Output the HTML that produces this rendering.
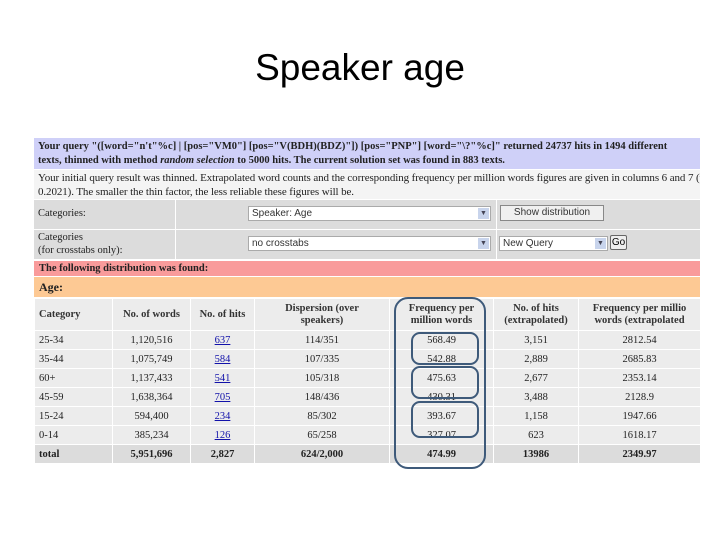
<!DOCTYPE html>
<html><head><meta charset="utf-8"><style>
body{margin:0;width:720px;height:540px;background:#fff;position:relative;overflow:hidden;font-family:"Liberation Serif",serif;}
.a{position:absolute;box-sizing:border-box;}
h1{position:absolute;left:0;width:720px;top:47px;margin:0;text-align:center;font:400 37px "Liberation Sans",sans-serif;color:#000;}
.t{font-size:10.5px;color:#222;line-height:14px;}
.sel{position:absolute;background:#fff;border:1px solid #aaa;font:10px "Liberation Sans",sans-serif;color:#333;padding-left:3px;line-height:13px;height:15px;box-sizing:border-box;}
.sel i{position:absolute;right:1px;top:1px;width:11px;height:11px;background:#c8d4ec;font-style:normal;font-size:7px;text-align:center;line-height:11px;color:#445;}
table{position:absolute;left:34px;top:298px;border-collapse:separate;border-spacing:1px;font-size:10.5px;color:#222;}
td{background:#ececec;text-align:center;padding:0;height:18px;}
tr.h td{font-weight:bold;height:31px;line-height:12px;color:#333;}
tr.tot td{background:#dcdcdc;font-weight:bold;}
td:first-child{text-align:left;padding-left:4px;}
a{color:#11a;text-decoration:underline;}
.r{border:2px solid #3e5a7a;border-radius:9px;}
</style></head><body>
<h1>Speaker age</h1>
<div class="a t" style="left:34px;top:138px;width:666px;height:31px;background:#cfd0f8;padding:2px 4px;font-weight:bold;white-space:nowrap;overflow:hidden;">Your query "([word="n't"%c] | [pos="VM0"] [pos="V(BDH)(BDZ)"]) [pos="PNP"] [word="\?"%c]" returned 24737 hits in 1494 different<br>texts, thinned with method <i>random selection</i> to 5000 hits. The current solution set was found in 883 texts.</div>
<div class="a t" style="left:34px;top:170px;width:666px;height:29px;background:#f4f4f4;padding:1px 4px;white-space:nowrap;overflow:hidden;font-size:11px;letter-spacing:-0.1px;">Your initial query result was thinned. Extrapolated word counts and the corresponding frequency per million words figures are given in columns 6 and 7 (thin-fa<br>0.2021). The smaller the thin factor, the less reliable these figures will be.</div>
<div class="a" style="left:34px;top:200px;width:141px;height:29px;background:#dcdcdc;"></div>
<div class="a" style="left:176px;top:200px;width:320px;height:29px;background:#dcdcdc;"></div>
<div class="a" style="left:497px;top:200px;width:203px;height:29px;background:#dcdcdc;"></div>
<div class="a" style="left:34px;top:230px;width:141px;height:29px;background:#dcdcdc;"></div>
<div class="a" style="left:176px;top:230px;width:320px;height:29px;background:#dcdcdc;"></div>
<div class="a" style="left:497px;top:230px;width:203px;height:29px;background:#dcdcdc;"></div>
<div class="a t" style="left:38px;top:207px;font-size:10.5px;">Categories:</div>
<div class="a t" style="left:38px;top:231px;font-size:10.5px;line-height:13px;">Categories<br>(for crosstabs only):</div>
<div class="sel" style="left:248px;top:206px;width:243px;">Speaker: Age<i>▼</i></div>
<div class="sel" style="left:248px;top:236px;width:243px;">no crosstabs<i>▼</i></div>
<div class="sel" style="left:499px;top:236px;width:109px;">New Query<i>▼</i></div>
<div class="a" style="left:610px;top:235px;width:17px;height:15px;background:#eee;border:1px solid #666;border-radius:2px;font:10px 'Liberation Sans',sans-serif;text-align:center;line-height:13px;">Go</div>
<div class="a" style="left:500px;top:205px;width:104px;height:16px;background:#f0f0f0;border:1px solid #888;font:10px 'Liberation Sans',sans-serif;text-align:center;line-height:14px;color:#333;">Show distribution</div>
<div class="a t" style="left:34px;top:261px;width:666px;height:15px;background:#f99b9b;padding:1px 5px;font-weight:bold;">The following distribution was found:</div>
<div class="a t" style="left:34px;top:277px;width:666px;height:20px;background:#fdc994;padding:3px 5px;font-weight:bold;font-size:12px;">Age:</div>
<table>
<tr class="h"><td style="width:73px">Category</td><td style="width:77px">No. of words</td><td style="width:63px">No. of hits</td><td style="width:134px">Dispersion (over<br>speakers)</td><td style="width:103px">Frequency per<br>million words</td><td style="width:84px">No. of hits<br>(extrapolated)</td><td style="width:121px;white-space:nowrap">Frequency per millio<br>words (extrapolated</td></tr>
<tr><td>25-34</td><td>1,120,516</td><td><a>637</a></td><td>114/351</td><td>568.49</td><td>3,151</td><td>2812.54</td></tr>
<tr><td>35-44</td><td>1,075,749</td><td><a>584</a></td><td>107/335</td><td>542.88</td><td>2,889</td><td>2685.83</td></tr>
<tr><td>60+</td><td>1,137,433</td><td><a>541</a></td><td>105/318</td><td>475.63</td><td>2,677</td><td>2353.14</td></tr>
<tr><td>45-59</td><td>1,638,364</td><td><a>705</a></td><td>148/436</td><td>430.31</td><td>3,488</td><td>2128.9</td></tr>
<tr><td>15-24</td><td>594,400</td><td><a>234</a></td><td>85/302</td><td>393.67</td><td>1,158</td><td>1947.66</td></tr>
<tr><td>0-14</td><td>385,234</td><td><a>126</a></td><td>65/258</td><td>327.07</td><td>623</td><td>1618.17</td></tr>
<tr class="tot"><td>total</td><td>5,951,696</td><td>2,827</td><td>624/2,000</td><td>474.99</td><td>13986</td><td>2349.97</td></tr>
</table>
<div class="a r" style="left:394px;top:297px;width:92px;height:172px;border-radius:14px;"></div>
<div class="a r" style="left:411px;top:332px;width:68px;height:33px;"></div>
<div class="a r" style="left:411px;top:366px;width:68px;height:33px;"></div>
<div class="a r" style="left:411px;top:401px;width:68px;height:37px;"></div>
</body></html>
